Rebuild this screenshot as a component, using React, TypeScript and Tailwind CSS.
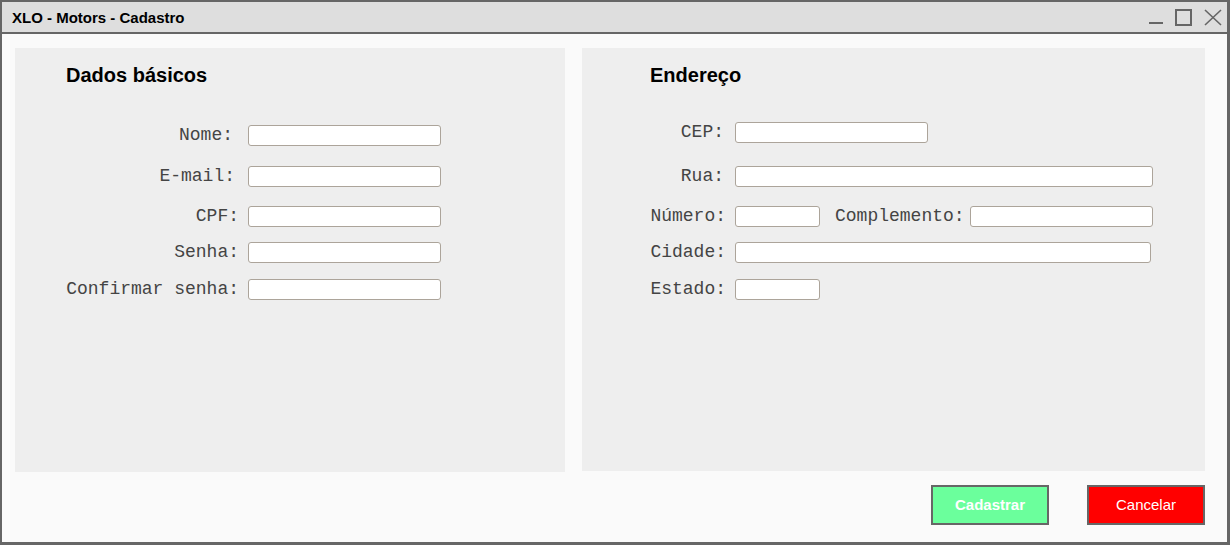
const mono = { fontFamily: '"Liberation Mono", "Courier New", monospace' };

function Field({ w, className = "" }: { w: string; className?: string }) {
  return (
    <div
      className={`h-[21px] shrink-0 rounded-[3px] border border-[#aca49a] bg-white ${w} ${className}`}
    />
  );
}

function Label({ children, w, className = "" }: { children: React.ReactNode; w: string; className?: string }) {
  return (
    <span
      className={`${w} shrink-0 whitespace-pre text-right text-[18px] leading-[21px] text-[#444] ${className}`}
      style={mono}
    >
      {children}
    </span>
  );
}

function WindowControls() {
  return (
    <div className="flex items-center gap-[12px] pr-[5px] text-[#666]">
      <svg width="15" height="16" viewBox="0 0 15 16" aria-hidden>
        <line x1="1" y1="14" x2="15" y2="14" stroke="currentColor" strokeWidth="2" />
      </svg>
      <svg width="17" height="17" viewBox="0 0 17 17" aria-hidden>
        <rect x="1" y="1" width="15" height="15" fill="none" stroke="currentColor" strokeWidth="2" />
      </svg>
      <svg width="18" height="17" viewBox="0 0 18 17" aria-hidden>
        <path d="M1 1 L17 16 M17 1 L1 16" stroke="currentColor" strokeWidth="1.6" fill="none" />
      </svg>
    </div>
  );
}

export default function App() {
  return (
    <div
      className="flex h-[545px] w-[1230px] flex-col border-b-[3px] border-l-2 border-r-[3px] border-t-2 border-[#666] bg-[#fafafa]"
      style={{ fontFamily: '"Liberation Sans", Arial, sans-serif' }}
    >
      {/* title bar */}
      <div className="flex h-[32px] shrink-0 items-center justify-between border-b-2 border-[#666] bg-[#dedede] pl-[10px]">
        <span className="text-[15px] font-bold leading-none text-black">XLO - Motors - Cadastro</span>
        <WindowControls />
      </div>

      <div className="flex flex-1 flex-col pb-[17px] pl-[13px] pr-[22px] pt-[14px]">
        <div className="flex items-start gap-[17px]">
          {/* Dados básicos */}
          <section className="h-[424px] w-[550px] bg-[#eeeeee] pl-[51px] pt-[16px]">
            <h2 className="text-[20px] font-bold leading-[22px] text-black">Dados básicos</h2>
            <div className="mt-[39px] flex flex-col">
              <div className="flex items-center gap-[9px]">
                <Label w="w-[173px]" className="pr-[6px]">Nome:</Label>
                <Field w="w-[193px]" />
              </div>
              <div className="mt-[20px] flex items-center gap-[9px]">
                <Label w="w-[173px]" className="pr-[4px]">E-mail:</Label>
                <Field w="w-[193px]" />
              </div>
              <div className="mt-[19px] flex items-center gap-[9px]">
                <Label w="w-[173px]">CPF:</Label>
                <Field w="w-[193px]" />
              </div>
              <div className="mt-[15px] flex items-center gap-[9px]">
                <Label w="w-[173px]">Senha:</Label>
                <Field w="w-[193px]" />
              </div>
              <div className="mt-[16px] flex items-center gap-[9px]">
                <Label w="w-[173px]">Confirmar senha:</Label>
                <Field w="w-[193px]" />
              </div>
            </div>
          </section>

          {/* Endereço */}
          <section className="h-[423px] w-[623px] bg-[#eeeeee] pl-[68px] pt-[16px]">
            <h2 className="text-[20px] font-bold leading-[22px] text-black">Endereço</h2>
            <div className="mt-[36px] flex flex-col">
              <div className="flex items-center gap-[9px]">
                <Label w="w-[76px]" className="pr-[2px]">CEP:</Label>
                <Field w="w-[193px]" />
              </div>
              <div className="mt-[23px] flex items-center gap-[9px]">
                <Label w="w-[76px]" className="pr-[2px]">Rua:</Label>
                <Field w="w-[418px]" />
              </div>
              <div className="mt-[19px] flex items-center gap-[9px]">
                <Label w="w-[76px]">Número:</Label>
                <Field w="w-[85px]" />
                <span className="ml-[6px] whitespace-pre text-[18px] leading-[21px] text-[#444]" style={mono}>
                  Complemento:
                </span>
                <Field w="w-[183px]" className="-ml-[4px]" />
              </div>
              <div className="mt-[15px] flex items-center gap-[9px]">
                <Label w="w-[76px]">Cidade:</Label>
                <Field w="w-[416px]" />
              </div>
              <div className="mt-[16px] flex items-center gap-[9px]">
                <Label w="w-[76px]">Estado:</Label>
                <Field w="w-[85px]" />
              </div>
            </div>
          </section>
        </div>

        <div className="mt-[13px] flex justify-end gap-[38px]">
          <button className="h-[40px] w-[118px] border-2 border-[#666] bg-[#6bff9c] text-[15px] font-bold text-white">
            Cadastrar
          </button>
          <button className="h-[40px] w-[118px] border-2 border-[#666] bg-[#ff0000] text-[15px] text-white">
            Cancelar
          </button>
        </div>
      </div>
    </div>
  );
}
